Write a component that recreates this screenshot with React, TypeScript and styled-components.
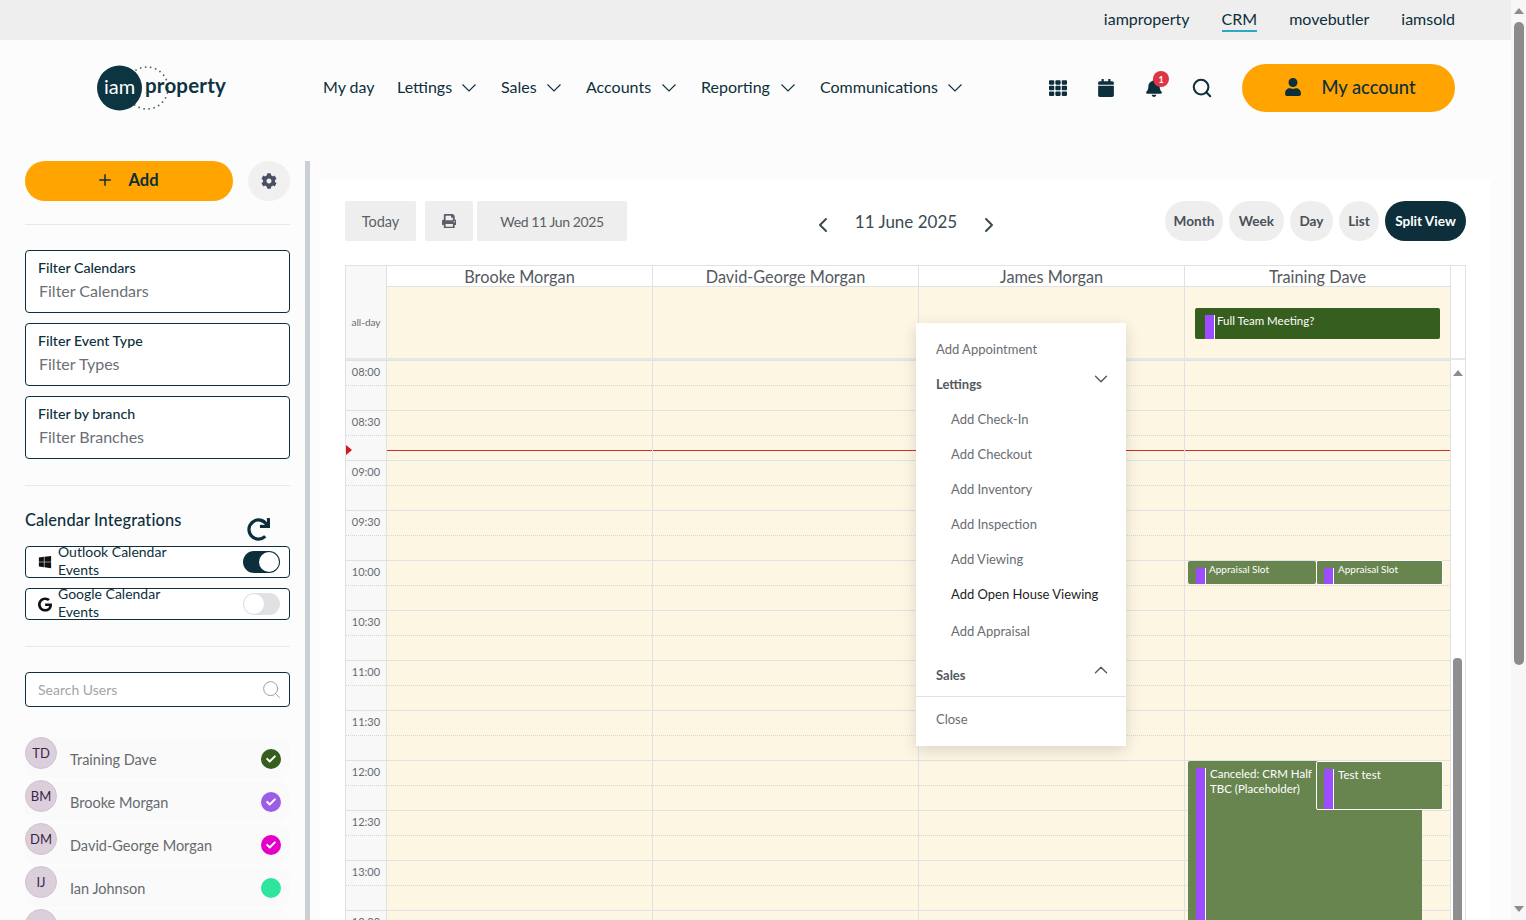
import styled, { createGlobalStyle } from 'styled-components';
import { FaTh, FaCalendar, FaBell, FaUser, FaCog, FaPrint, FaRedo, FaWindows, FaGoogle, FaCheck } from 'react-icons/fa';
import { ChevronDown, ChevronUp, ChevronLeft, ChevronRight, Plus, Search } from 'lucide-react';

const GlobalStyle = createGlobalStyle`
    html, body {
        margin: 0;
        padding: 0;
        height: 920px;
        overflow: hidden;
        font-family: "Lato", "Liberation Sans", sans-serif;
        color: #0d2f3b;
    }
    * { box-sizing: border-box; }
`;

const Page = styled.div`
    display: flex;
    height: 920px;
    overflow: hidden;
    background-color: #fcfcfc;
`;

const Main = styled.div`
    flex: 1;
    min-width: 0;
    display: flex;
    flex-direction: column;
`;

const PageScroll = styled.div`
    width: 15px;
    background-color: #f7f7f7;
    display: flex;
    flex-direction: column;
    align-items: center;
`;

const PageThumb = styled.div`
    width: 10px;
    height: 643px;
    margin-top: 8px;
    border-radius: 5px;
    background-color: #8c8c8c;
`;

const Caret = styled.div<{ $down?: boolean; $auto?: boolean }>`
    width: 0;
    height: 0;
    margin-top: ${(props) => (props.$auto ? 'auto' : '8px')};
    margin-bottom: ${(props) => (props.$auto ? '8px' : '0')};
    border-left: 5px solid transparent;
    border-right: 5px solid transparent;
    border-bottom: ${(props) => (props.$down ? 'none' : '6px solid #8c8c8c')};
    border-top: ${(props) => (props.$down ? '6px solid #8c8c8c' : 'none')};
`;

const TopBar = styled.div`
    height: 40px;
    flex-shrink: 0;
    background-color: #eeeeee;
    display: flex;
    justify-content: flex-end;
    align-items: center;
    gap: 32px;
    padding-right: 56px;
`;

const TopLink = styled.a<{ $active?: boolean }>`
    font-size: 16px;
    height: 24px;
    line-height: 21px;
    margin-top: 0;
    border-bottom: 2px solid ${(props) => (props.$active ? '#2aa8c4' : 'transparent')};
`;

const Header = styled.header`
    height: 96px;
    flex-shrink: 0;
    display: flex;
    align-items: center;
    padding: 0 56px 0 97px;
`;

const Logo = styled.svg`
    width: 132px;
    height: 48px;
    margin-top: -1px;
    margin-right: 94px;
    flex-shrink: 0;
`;

const Nav = styled.nav`
    display: flex;
    align-items: center;
    margin-top: -3px;
`;

const NavItem = styled.a<{ $width: number }>`
    display: flex;
    align-items: center;
    justify-content: space-between;
    width: ${(props) => props.$width}px;
    padding-right: 25px;
    font-size: 16px;
    white-space: nowrap;
`;

const NavChevron = styled.svg`
    width: 14px;
    height: 8px;
    margin-top: 3px;
    fill: none;
    stroke: #0d2f3b;
    stroke-width: 1.1;
`;

const HeaderRight = styled.div`
    margin-left: auto;
    display: flex;
    align-items: center;
`;

const IconButton = styled.div`
    width: 48px;
    height: 48px;
    position: relative;
    display: flex;
    align-items: center;
    justify-content: center;
    font-size: 18px;
`;

const Badge = styled.span`
    position: absolute;
    top: 7px;
    left: 23px;
    width: 16px;
    height: 16px;
    border-radius: 50%;
    background-color: #dc3545;
    color: #ffffff;
    font-size: 9px;
    font-weight: 700;
    display: flex;
    align-items: center;
    justify-content: center;
`;

const AccountButton = styled.button`
    width: 213px;
    height: 48px;
    margin-left: 16px;
    padding: 0 0 2px 3px;
    border: none;
    border-radius: 24px;
    background-color: #ffa400;
    color: #0d2f3b;
    font-family: inherit;
    font-size: 18.3px;
    font-weight: 500;
    display: flex;
    align-items: center;
    justify-content: center;
    gap: 19px;
`;

const Body = styled.div`
    flex: 1;
    min-height: 0;
    display: flex;
    margin-top: 25px;
`;

const Sidebar = styled.aside`
    width: 310px;
    flex-shrink: 0;
    padding: 0 15px 0 25px;
    border-right: 5px solid #cbcfd3;
    overflow: hidden;
`;

const AddRow = styled.div`
    display: flex;
    justify-content: space-between;
    padding-bottom: 23px;
    border-bottom: 1px solid #e8e8e8;
    margin-bottom: 25px;
`;

const AddButton = styled.button`
    width: 208px;
    height: 40px;
    padding: 0 3px 3px 0;
    border: none;
    border-radius: 20px;
    background-color: #ffa400;
    color: #0d2f3b;
    font-family: inherit;
    font-size: 16.5px;
    font-weight: 700;
    display: flex;
    align-items: center;
    justify-content: center;
    gap: 14px;
`;

const GearButton = styled.div`
    width: 42px;
    height: 40px;
    border-radius: 50%;
    background-color: #f0f0f0;
    color: #4a4f63;
    font-size: 16px;
    display: flex;
    align-items: center;
    justify-content: center;
`;

const FilterBox = styled.div`
    height: 63px;
    margin-bottom: 10px;
    padding: 8px 12px;
    border: 1px solid #0d2f3b;
    border-radius: 4px;
    background-color: #ffffff;
`;

const FilterLabel = styled.div`
    font-size: 14.2px;
    font-weight: 500;
    line-height: 18px;
    margin-bottom: 2px;
`;

const FilterValue = styled.div`
    font-size: 16px;
    line-height: 24px;
    padding-left: 1px;
    color: #6b6f76;
`;

const Rule = styled.div`
    height: 1px;
    margin-top: 26px;
    background-color: #e8e8e8;
`;

const IntegrationsHead = styled.div`
    height: 36px;
    margin-top: 24px;
    display: flex;
    justify-content: space-between;
    font-size: 16.4px;
    font-weight: 500;
    line-height: 20px;
    letter-spacing: 0.1px;
    padding-right: 20px;
`;

const RefreshIcon = styled.span`
    font-size: 23px;
    margin-top: 8px;
`;

const IntegrationBox = styled.div`
    height: 32px;
    margin-bottom: 10px;
    padding: 0 9px 0 12px;
    border: 1px solid #0d2f3b;
    border-radius: 4px;
    background-color: #ffffff;
    display: flex;
    align-items: center;
    gap: 6px;
`;

const IntegrationText = styled.div`
    width: 130px;
    font-size: 14px;
    line-height: 18px;
    height: 36px;
    margin-top: -2px;
`;

const BrandIcon = styled.span<{ $size: number }>`
    display: flex;
    width: 14px;
    font-size: ${(props) => props.$size}px;
    color: #111111;
`;

const Toggle = styled.div<{ $on?: boolean }>`
    width: 37px;
    height: 22px;
    margin-left: auto;
    border-radius: 11px;
    padding: 1px;
    background-color: ${(props) => (props.$on ? '#0d2f3b' : '#dfe1e3')};
    display: flex;
    justify-content: ${(props) => (props.$on ? 'flex-end' : 'flex-start')};
`;

const Knob = styled.div`
    width: 20px;
    height: 20px;
    border-radius: 50%;
    background-color: #ffffff;
`;

const SearchBox = styled.div`
    height: 35px;
    margin-top: 25px;
    margin-bottom: 31px;
    padding: 0 7px 0 12px;
    border: 1px solid #0d2f3b;
    border-radius: 4px;
    background-color: #ffffff;
    display: flex;
    align-items: center;
    justify-content: space-between;
    font-size: 14px;
    color: #a4a4a4;
`;

const UserRow = styled.div`
    height: 40px;
    margin-bottom: 3px;
    border-radius: 12px;
    background-color: #fafafa;
    display: flex;
    align-items: center;
    padding-right: 9px;
`;

const Avatar = styled.div`
    width: 32px;
    height: 32px;
    align-self: flex-start;
    margin-top: -1px;
    padding-bottom: 1px;
    border-radius: 50%;
    border: 1px solid #d0c4d0;
    background-color: #dccfdc;
    color: #3d1f47;
    font-size: 13px;
    display: flex;
    align-items: center;
    justify-content: center;
    flex-shrink: 0;
`;

const UserName = styled.div`
    margin-left: 13px;
    margin-top: 2px;
    font-size: 14.5px;
    color: #666a6e;
`;

const UserDot = styled.div<{ $color: string }>`
    width: 20px;
    height: 20px;
    margin-left: auto;
    margin-top: 1px;
    border-radius: 50%;
    background-color: ${(props) => props.$color};
    color: #ffffff;
    font-size: 10px;
    display: flex;
    align-items: center;
    justify-content: center;
`;

const Content = styled.main`
    width: 1170px;
    margin: 19px 0 0 10px;
    padding: 21px 24px 0 25px;
    background-color: #ffffff;
    overflow: hidden;
`;

const Toolbar = styled.div`
    height: 40px;
    margin-bottom: 24px;
    display: flex;
    align-items: center;
    justify-content: space-between;
`;

const ToolGroup = styled.div`
    display: flex;
    align-items: center;
`;

const SquareButton = styled.div<{ $width: number; $gap: number }>`
    width: ${(props) => props.$width}px;
    height: 40px;
    margin-right: ${(props) => props.$gap}px;
    border-radius: 2px;
    background-color: #eeeeee;
    color: #5b5f66;
    font-size: 14.5px;
    display: flex;
    align-items: center;
    justify-content: center;
`;

const DateButton = styled(SquareButton)`
    font-size: 14px;
    letter-spacing: -0.4px;
`;

const MonthNav = styled.div`
    display: flex;
    align-items: center;
    gap: 20px;
    margin-left: 26px;
    font-size: 17px;
    color: #3b4a52;
    svg {
        margin-top: 8px;
    }
`;

const Pill = styled.div<{ $width: number; $active?: boolean }>`
    width: ${(props) => props.$width}px;
    height: 40px;
    margin-left: 6px;
    border-radius: 20px;
    background-color: ${(props) => (props.$active ? '#0d2f3b' : '#eeeeee')};
    color: ${(props) => (props.$active ? '#ffffff' : '#4a4f5a')};
    font-size: 13.6px;
    font-weight: 700;
    display: flex;
    align-items: center;
    justify-content: center;
`;

const Calendar = styled.div`
    position: relative;
    width: 1121px;
    border: 1px solid #dfe1e4;
    border-bottom: none;
`;

const CalRow = styled.div`
    display: flex;
`;

const AxisCell = styled.div<{ $height: number }>`
    width: 40px;
    height: ${(props) => props.$height}px;
    flex-shrink: 0;
    background-color: #f8f8f9;
    color: #666a6e;
    font-size: 10px;
    display: flex;
    align-items: center;
    justify-content: center;
`;

const DayHead = styled.div`
    width: 266px;
    height: 20px;
    flex-shrink: 0;
    border-left: 1px solid #dfe1e4;
    color: #55595e;
    font-size: 16.3px;
    line-height: 21px;
    text-align: center;
`;

const AllDayCell = styled.div`
    position: relative;
    width: 266px;
    height: 72px;
    flex-shrink: 0;
    border-left: 1px solid #dfe1e4;
    border-top: 1px solid #dfe1e4;
    background-color: #fdf6e3;
`;

const TailCell = styled.div`
    flex: 1;
    border-left: 1px solid #dfe1e4;
`;

const Separator = styled.div`
    height: 2px;
    background-color: #e6e7e9;
`;

const TimeAxis = styled.div`
    width: 40px;
    flex-shrink: 0;
    background-color: #f8f8f9;
`;

const TimeLabel = styled.div`
    height: 50px;
    border-top: 1px solid #e0e1e3;
    padding-top: 4px;
    color: #666a6e;
    font-size: 11px;
    text-align: center;
    background-image: linear-gradient(to right, #d6d6d6 50%, transparent 50%);
    background-size: 2px 1px;
    background-repeat: repeat-x;
    background-position: 0 24px;
`;

const DayColumn = styled.div`
    position: relative;
    width: 266px;
    flex-shrink: 0;
    border-left: 1px solid #dfe1e4;
    background-color: #fdf6e3;
`;

const Slot = styled.div`
    height: 50px;
    border-top: 1px solid #e0e1e3;
    background-image: linear-gradient(to right, #d6d6d6 50%, transparent 50%);
    background-size: 2px 1px;
    background-repeat: repeat-x;
    background-position: 0 24px;
`;

const NowLine = styled.div`
    position: absolute;
    left: 0;
    right: 0;
    top: 90px;
    height: 1px;
    background-color: #c9302c;
`;

const NowMarker = styled.div`
    position: absolute;
    left: 0;
    top: 179px;
    border-left: 6px solid #d8161b;
    border-top: 5px solid transparent;
    border-bottom: 5px solid transparent;
`;

const Gutter = styled.div`
    position: relative;
    flex: 1;
    display: flex;
    justify-content: center;
    border-left: 1px solid #dfe1e4;
    padding-top: 2px;
`;

const GutterThumb = styled.div`
    position: absolute;
    left: 2px;
    top: 298px;
    width: 9px;
    height: 400px;
    border-radius: 4px;
    background-color: #8f8f8f;
`;

const EventBox = styled.div<{ $left: number; $top: number; $width: number; $height: number; $border?: boolean; $bg: string; $size: number }>`
    position: absolute;
    left: ${(props) => props.$left}px;
    top: ${(props) => props.$top}px;
    width: ${(props) => props.$width}px;
    height: ${(props) => props.$height}px;
    border-radius: 2px;
    overflow: hidden;
    background-color: ${(props) => props.$bg};
    border: ${(props) => (props.$border ? '1px solid #ffffff' : 'none')};
    color: #ffffff;
    font-size: ${(props) => props.$size}px;
    line-height: ${(props) => props.$size + 3.5}px;
    padding-top: ${(props) => (props.$size < 11 ? '2px' : '5px')};
    padding-left: ${(props) => (props.$size < 11 || props.$border ? '21px' : '22px')};
`;

const EventTitle = styled.div`
    max-width: 108px;
`;

const EventStripe = styled.span<{ $left: number }>`
    position: absolute;
    left: ${(props) => props.$left}px;
    top: 7px;
    bottom: 0;
    width: 10px;
    background-color: #9b4dff;
    border-right: 1px solid #ffffff;
`;

const ActionMenu = styled.div`
    position: absolute;
    left: 570px;
    top: 57px;
    width: 210px;
    height: 423px;
    padding-top: 8px;
    background-color: #ffffff;
    box-shadow: 0 4px 14px rgba(0, 0, 0, 0.14);
    z-index: 5;
    font-size: 13px;
    color: #6a6d72;
`;

const MenuItem = styled.div<{ $sub?: boolean; $dark?: boolean; $top?: number }>`
    height: 35px;
    margin-top: ${(props) => props.$top || 0}px;
    padding-left: ${(props) => (props.$sub ? '35px' : '20px')};
    display: flex;
    align-items: center;
    color: ${(props) => (props.$dark ? '#1c1f24' : '#6a6d72')};
`;

const MenuGroup = styled.div<{ $top?: number }>`
    height: 35px;
    margin-top: ${(props) => props.$top || 0}px;
    padding: 0 14px 0 20px;
    display: flex;
    align-items: center;
    justify-content: space-between;
    font-size: 13px;
    font-weight: 700;
    color: #55595e;
    svg {
        margin-top: -9px;
    }
`;

const MenuRule = styled.div`
    height: 1px;
    margin-top: 4px;
    background-color: #e2e2e2;
`;

const people = ['Brooke Morgan', 'David-George Morgan', 'James Morgan', 'Training Dave'];
const times = ['08:00', '08:30', '09:00', '09:30', '10:00', '10:30', '11:00', '11:30', '12:00', '12:30', '13:00', '13:30'];
const users = [
    { initials: 'TD', name: 'Training Dave', color: '#365e1e', checked: true },
    { initials: 'BM', name: 'Brooke Morgan', color: '#9b5de5', checked: true },
    { initials: 'DM', name: 'David-George Morgan', color: '#e400c8', checked: true },
    { initials: 'IJ', name: 'Ian Johnson', color: '#2ee59d', checked: false },
    { initials: '', name: '', color: 'transparent', checked: false },
];
const events = [
    { title: 'Appraisal Slot', left: 3, top: 201, width: 128, height: 23, size: 10, border: false },
    { title: 'Appraisal Slot', left: 131, top: 200, width: 127, height: 25, size: 10, border: true },
    { title: 'Canceled: CRM Half TBC (Placeholder)', left: 3, top: 401, width: 234, height: 300, size: 11.5, border: false },
    { title: 'Test test', left: 131, top: 401, width: 127, height: 49, size: 11.5, border: true },
];
const letting = ['Add Check-In', 'Add Checkout', 'Add Inventory', 'Add Inspection', 'Add Viewing'];

function Chevron() {
    return (
        <NavChevron viewBox="0 0 14 8">
            <path d="M0.5 0.5L7 7L13.5 0.5" />
        </NavChevron>
    );
}

function App() {
    return (
        <>
            <GlobalStyle />
            <Page>
                <Main>
                    <TopBar>
                        <TopLink>iamproperty</TopLink>
                        <TopLink $active>CRM</TopLink>
                        <TopLink>movebutler</TopLink>
                        <TopLink>iamsold</TopLink>
                    </TopBar>
                    <Header>
                        <Logo viewBox="0 0 132 48">
                            <circle cx="50" cy="24" r="21" fill="none" stroke="#4c6670" strokeWidth="1.8" strokeDasharray="0.1 5" strokeLinecap="round" />
                            <circle cx="22.5" cy="24" r="22.5" fill="#0d3441" />
                            <text x="22.5" y="29.5" textAnchor="middle" fontSize="20" fill="#ffffff" fontFamily="Lato">iam</text>
                            <text x="48" y="29" fontSize="20.5" fontWeight="700" fill="#0d3441" fontFamily="Lato" letterSpacing="0.2">property</text>
                        </Logo>
                        <Nav>
                            <NavItem $width={74}>My day</NavItem>
                            <NavItem $width={104}>Lettings <Chevron /></NavItem>
                            <NavItem $width={85}>Sales <Chevron /></NavItem>
                            <NavItem $width={115}>Accounts <Chevron /></NavItem>
                            <NavItem $width={119}>Reporting <Chevron /></NavItem>
                            <NavItem $width={167}>Communications <Chevron /></NavItem>
                        </Nav>
                        <HeaderRight>
                            <IconButton><FaTh /></IconButton>
                            <IconButton><FaCalendar /></IconButton>
                            <IconButton><FaBell /><Badge>1</Badge></IconButton>
                            <IconButton><Search size={22} strokeWidth={2.25} /></IconButton>
                            <AccountButton><FaUser size={18} /> My account</AccountButton>
                        </HeaderRight>
                    </Header>
                    <Body>
                        <Sidebar>
                            <AddRow>
                                <AddButton><Plus size={18} strokeWidth={2} /> Add</AddButton>
                                <GearButton><FaCog /></GearButton>
                            </AddRow>
                            <FilterBox>
                                <FilterLabel>Filter Calendars</FilterLabel>
                                <FilterValue>Filter Calendars</FilterValue>
                            </FilterBox>
                            <FilterBox>
                                <FilterLabel>Filter Event Type</FilterLabel>
                                <FilterValue>Filter Types</FilterValue>
                            </FilterBox>
                            <FilterBox>
                                <FilterLabel>Filter by branch</FilterLabel>
                                <FilterValue>Filter Branches</FilterValue>
                            </FilterBox>
                            <Rule />
                            <IntegrationsHead>
                                Calendar Integrations
                                <RefreshIcon><FaRedo /></RefreshIcon>
                            </IntegrationsHead>
                            <IntegrationBox>
                                <BrandIcon $size={14}><FaWindows /></BrandIcon>
                                <IntegrationText>Outlook Calendar Events</IntegrationText>
                                <Toggle $on><Knob /></Toggle>
                            </IntegrationBox>
                            <IntegrationBox>
                                <BrandIcon $size={15}><FaGoogle /></BrandIcon>
                                <IntegrationText>Google Calendar Events</IntegrationText>
                                <Toggle><Knob /></Toggle>
                            </IntegrationBox>
                            <Rule />
                            <SearchBox>
                                Search Users
                                <Search size={21} strokeWidth={1.1} color="#9a9a9a" />
                            </SearchBox>
                            {users.map((user, i) => (
                                <UserRow key={i}>
                                    <Avatar>{user.initials}</Avatar>
                                    <UserName>{user.name}</UserName>
                                    <UserDot $color={user.color}>{user.checked && <FaCheck />}</UserDot>
                                </UserRow>
                            ))}
                        </Sidebar>
                        <Content>
                            <Toolbar>
                                <ToolGroup>
                                    <SquareButton $width={71} $gap={9}>Today</SquareButton>
                                    <SquareButton $width={48} $gap={4}><FaPrint /></SquareButton>
                                    <DateButton $width={150} $gap={0}>Wed 11 Jun 2025</DateButton>
                                </ToolGroup>
                                <MonthNav>
                                    <ChevronLeft size={24} strokeWidth={2} />
                                    11 June 2025
                                    <ChevronRight size={24} strokeWidth={2} />
                                </MonthNav>
                                <ToolGroup>
                                    <Pill $width={58}>Month</Pill>
                                    <Pill $width={55}>Week</Pill>
                                    <Pill $width={43}>Day</Pill>
                                    <Pill $width={40}>List</Pill>
                                    <Pill $width={81} $active>Split View</Pill>
                                </ToolGroup>
                            </Toolbar>
                            <Calendar>
                                <CalRow>
                                    <AxisCell $height={20} />
                                    {people.map((person) => <DayHead key={person}>{person}</DayHead>)}
                                    <TailCell />
                                </CalRow>
                                <CalRow>
                                    <AxisCell $height={72}>all-day</AxisCell>
                                    {people.map((person) => (
                                        <AllDayCell key={person}>
                                            {person === 'Training Dave' && (
                                                <EventBox $left={10} $top={21} $width={245} $height={31} $bg="#365e1e" $size={11.5}>
                                                    <EventStripe $left={10} />
                                                    Full Team Meeting?
                                                </EventBox>
                                            )}
                                        </AllDayCell>
                                    ))}
                                    <TailCell />
                                </CalRow>
                                <Separator />
                                <CalRow>
                                    <TimeAxis>
                                        {times.map((time) => <TimeLabel key={time}>{time}</TimeLabel>)}
                                    </TimeAxis>
                                    {people.map((person) => (
                                        <DayColumn key={person}>
                                            {times.map((time) => <Slot key={time} />)}
                                            <NowLine />
                                            {person === 'Training Dave' && events.map((event, i) => (
                                                <EventBox
                                                    key={i}
                                                    $left={event.left}
                                                    $top={event.top}
                                                    $width={event.width}
                                                    $height={event.height}
                                                    $border={event.border}
                                                    $bg="#688550"
                                                    $size={event.size}
                                                >
                                                    <EventStripe $left={event.border ? 7 : 8} />
                                                    <EventTitle>{event.title}</EventTitle>
                                                </EventBox>
                                            ))}
                                        </DayColumn>
                                    ))}
                                    <Gutter>
                                        <Caret />
                                        <GutterThumb />
                                    </Gutter>
                                </CalRow>
                                <NowMarker />
                                <ActionMenu>
                                    <MenuItem>Add Appointment</MenuItem>
                                    <MenuGroup>Lettings <ChevronDown size={22} strokeWidth={1.5} /></MenuGroup>
                                    {letting.map((item) => <MenuItem key={item} $sub>{item}</MenuItem>)}
                                    <MenuItem $sub $dark>Add Open House Viewing</MenuItem>
                                    <MenuItem $sub $top={2}>Add Appraisal</MenuItem>
                                    <MenuGroup $top={9}>Sales <ChevronUp size={22} strokeWidth={1.5} /></MenuGroup>
                                    <MenuRule />
                                    <MenuItem $top={4}>Close</MenuItem>
                                </ActionMenu>
                            </Calendar>
                        </Content>
                    </Body>
                </Main>
                <PageScroll>
                    <Caret />
                    <PageThumb />
                    <Caret $down $auto />
                </PageScroll>
            </Page>
        </>
    );
}

export default App;
